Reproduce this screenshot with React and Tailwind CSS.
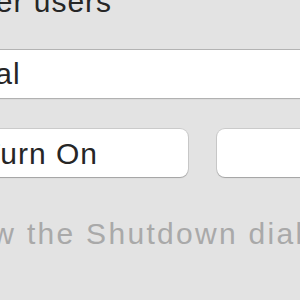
export default function App() {
  return (
    <div
      className="w-[300px] h-[300px] overflow-hidden bg-[#e3e3e3] text-[#262626]"
      style={{ fontFamily: '"Liberation Sans", Arial, sans-serif' }}
    >
      {/* label */}
      <div className="-mt-[13px] -ml-[49px] whitespace-nowrap text-[30px] leading-[30px] tracking-[1px]">
        other users
      </div>

      {/* text field */}
      <div className="mt-[32px] -ml-[20px] w-[340px] h-[49px] bg-white border-t border-[#b3b3b3] shadow-[0_1px_1px_rgba(0,0,0,0.22)] pt-[9px]">
        <div className="-ml-[62px] whitespace-nowrap text-[30px] leading-[30px] tracking-[1px]">
          Normal
        </div>
      </div>

      {/* buttons */}
      <div className="mt-[31px] -ml-[40px] flex gap-[29px]">
        <button className="w-[228px] h-[48px] shrink-0 bg-white rounded-[8px] shadow-[0_0_0_1px_rgba(0,0,0,0.1),0_1px_1px_rgba(0,0,0,0.2)] text-left pl-[22px] pt-[2px] text-[30px] leading-[30px] tracking-[1px] whitespace-nowrap">
          Turn On
        </button>
        <button className="w-[150px] h-[48px] shrink-0 bg-white rounded-[8px] shadow-[0_0_0_1px_rgba(0,0,0,0.1),0_1px_1px_rgba(0,0,0,0.2)]" />
      </div>

      {/* hint */}
      <div className="mt-[42px] -ml-[68px] whitespace-nowrap text-[30px] leading-[30px] tracking-[2.3px] text-[#a9a9a9]">
        Show the Shutdown dialog
      </div>
    </div>
  );
}
